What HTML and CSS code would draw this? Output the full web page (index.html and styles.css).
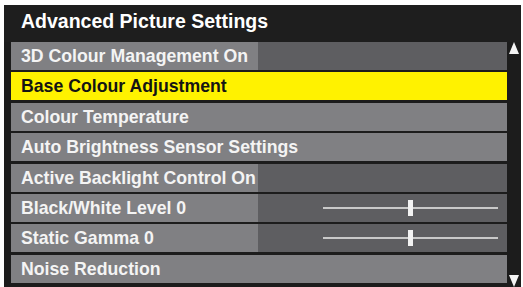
FILE: index.html
```html
<!DOCTYPE html>
<html>
<head>
<meta charset="utf-8">
<link rel="stylesheet" href="styles.css">
</head>
<body>
<div class="panel">
  <div class="title">Advanced Picture Settings</div>
  <div class="body">
    <div class="list">
      <div class="row split"><span class="label">3D Colour Management On</span><span class="value"></span></div>
      <div class="row selected"><span class="label">Base Colour Adjustment</span></div>
      <div class="row"><span class="label">Colour Temperature</span></div>
      <div class="row"><span class="label">Auto Brightness Sensor Settings</span></div>
      <div class="row split"><span class="label">Active Backlight Control On</span><span class="value"></span></div>
      <div class="row split"><span class="label">Black/White Level 0</span><span class="value"><span class="slider"><span class="thumb"></span></span></span></div>
      <div class="row split"><span class="label">Static Gamma 0</span><span class="value"><span class="slider"><span class="thumb"></span></span></span></div>
      <div class="row"><span class="label">Noise Reduction</span></div>
    </div>
    <div class="scroll">
      <span class="arrow up"></span>
      <span class="arrow down"></span>
    </div>
  </div>
</div>
</body>
</html>
```

FILE: styles.css
```css
html, body {
  margin: 0;
  padding: 0;
  background: #ffffff;
  width: 523px;
  height: 287px;
  overflow: hidden;
}

.panel {
  margin: 5px 0 0 4px;
  width: 517px;
  height: 290px;
  background: #1c1c1c;
  font-family: "Liberation Sans", Arial, sans-serif;
  font-weight: bold;
}

.title {
  height: 37px;
  padding-left: 17px;
  color: #ffffff;
  font-size: 19.5px;
  line-height: 33px;
  background: #1e1e1e;
}

.body {
  display: flex;
  padding-left: 7px;
}

.list {
  width: 496px;
  display: flex;
  flex-direction: column;
  gap: 2.4px;
}

.row {
  display: flex;
  height: 28px;
  background: #808083;
  color: #f4f4f4;
  font-size: 17.7px;
  line-height: 28px;
}

.row .label {
  padding-left: 10px;
  padding-right: 2px;
  white-space: nowrap;
}

.row.split .label {
  min-width: 235px;
  background: #808083;
}

.row.split .value {
  flex: 1;
  background: #5e5e61;
  display: flex;
  align-items: center;
  justify-content: flex-end;
  padding-right: 9px;
}

.row.selected {
  background: #fff200;
  color: #141414;
}

.slider {
  position: relative;
  width: 175px;
  height: 2px;
  background: #c9c9c9;
}

.thumb {
  position: absolute;
  left: 85px;
  top: -7px;
  width: 5px;
  height: 16px;
  background: #f2f2f2;
}

.scroll {
  width: 14px;
  height: 245px;
  display: flex;
  flex-direction: column;
  justify-content: space-between;
  align-items: center;
}

.arrow {
  width: 0;
  height: 0;
  border-left: 5.5px solid transparent;
  border-right: 5.5px solid transparent;
}

.arrow.up {
  border-bottom: 12px solid #f4f4f4;
}

.arrow.down {
  border-top: 12px solid #f4f4f4;
}
```
